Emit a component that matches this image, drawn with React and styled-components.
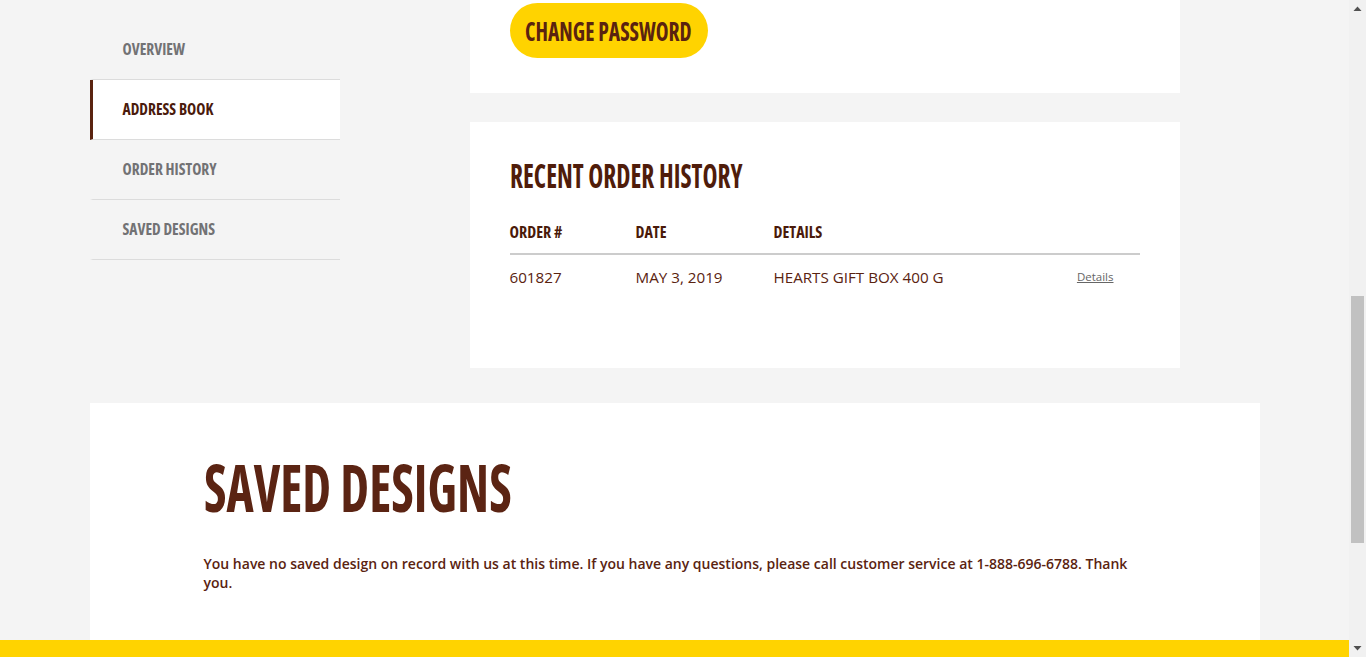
import React from 'react';
import styled, { createGlobalStyle } from 'styled-components';

const brown = '#5a2310';
const yellow = '#ffd300';

const GlobalStyle = createGlobalStyle`
  html, body {
    margin: 0;
    padding: 0;
  }
  body {
    background: #f4f4f4;
    font-family: "Open Sans", "Liberation Sans", sans-serif;
    color: ${brown};
  }
  * {
    box-sizing: border-box;
  }
`;

const Page = styled.div`
  display: flex;
  height: 100vh;
  overflow: hidden;
`;

const Content = styled.div`
  flex: 1;
  min-width: 0;
  display: flex;
  flex-direction: column;
  overflow: hidden;
`;

const Container = styled.div`
  width: 1170px;
  margin: 0 auto;
`;

const AccountGrid = styled.div`
  display: grid;
  grid-template-columns: 250px 710px;
  column-gap: 130px;
  align-items: start;
`;

const SideNav = styled.nav`
  display: flex;
  flex-direction: column;
  padding-top: 20px;
`;

const NavItem = styled.a`
  display: flex;
  align-items: center;
  height: 60px;
  padding-left: 30px;
  padding-bottom: 1px;
  border-left: 3px solid ${(p) => (p.$active ? brown : 'transparent')};
  border-bottom: 1px solid #dcdcdc;
  background: ${(p) => (p.$active ? '#ffffff' : 'transparent')};
  color: ${(p) => (p.$active ? '#4a1a0b' : '#727274')};
  font-size: 15.5px;
  font-weight: 700;
  font-stretch: 75%;
  text-decoration: none;
`;

const MainColumn = styled.div`
  display: flex;
  flex-direction: column;
  gap: 29px;
`;

const Card = styled.section`
  background: #ffffff;
  padding: ${(p) => p.$pad};
`;

const Squeeze = styled.span`
  display: inline-block;
  white-space: nowrap;
  transform: scaleX(${(p) => p.$x});
  transform-origin: ${(p) => p.$origin || 'left'} center;
`;

const PillButton = styled.button`
  display: flex;
  align-items: center;
  justify-content: center;
  width: 198px;
  height: 55px;
  border: 0;
  border-radius: 28px;
  background: ${yellow};
  color: ${brown};
  font-family: "Open Sans", sans-serif;
  font-size: 26px;
  font-weight: 700;
  font-stretch: 75%;
  padding: 0;
  cursor: pointer;
`;

const CardTitle = styled.h2`
  margin: 0;
  font-size: 33px;
  line-height: 33px;
  font-weight: 700;
  font-stretch: 75%;
  color: #4f1c0a;
`;

const OrderTable = styled.div`
  margin-top: 30px;
`;

const TableRow = styled.div`
  display: grid;
  grid-template-columns: 126px 138px 1fr auto;
  align-items: center;
  padding: ${(p) => (p.$head ? '0 0 11px' : '12px 0 0')};
  border-bottom: ${(p) => (p.$head ? '2px solid #cccccc' : '0')};
`;

const HeadCell = styled.span`
  font-size: 16px;
  line-height: 20px;
  font-weight: 700;
  font-stretch: 75%;
  color: #4a1a0a;
`;

const Cell = styled.span`
  font-size: 15.2px;
  line-height: 20px;
  font-weight: 400;
  font-stretch: 90%;
  color: ${brown};
`;

const DetailsLink = styled.a`
  margin-right: 26px;
  font-size: 11.5px;
  line-height: 20px;
  font-stretch: 95%;
  color: #666666;
  text-decoration: underline;
`;

const SavedSection = styled.section`
  margin-top: 35px;
  background: #ffffff;
  padding: 50px 114px 48px;
`;

const BigTitle = styled.h2`
  margin: 0;
  font-size: 67px;
  line-height: 67px;
  font-weight: 700;
  font-stretch: 75%;
  color: #5b2413;
`;

const Note = styled.p`
  margin: 34px 0 0;
  font-size: 14px;
  line-height: 19px;
  font-weight: 600;
  color: ${brown};
`;

const Footer = styled.footer`
  flex: none;
  height: 80px;
  background: ${yellow};
`;

const ScrollTrack = styled.div`
  flex: none;
  width: 17px;
  height: 100%;
  background: #f1f1f1;
  display: flex;
  flex-direction: column;
`;

const ArrowBox = styled.div`
  flex: none;
  height: 17px;
  display: flex;
  align-items: center;
  justify-content: center;
`;

const ThumbArea = styled.div`
  flex: 1;
  display: flex;
  flex-direction: column;
  align-items: center;
`;

const Thumb = styled.div`
  width: 13px;
  background: #c1c1c1;
`;

const Arrow = ({ up }) => (
  <svg width="9" height="5" viewBox="0 0 9 5">
    <polygon points={up ? '0.5,5 4.5,0.5 8.5,5' : '0.5,0 4.5,4.5 8.5,0'} fill="#505050" />
  </svg>
);

const navItems = [
  { label: 'OVERVIEW' },
  { label: 'ADDRESS BOOK', active: true },
  { label: 'ORDER HISTORY' },
  { label: 'SAVED DESIGNS' },
];

const orders = [
  { id: '601827', date: 'MAY 3, 2019', details: 'HEARTS GIFT BOX 400 G' },
];

// page is shown scrolled down: these give the thumb of the scrollbar
const scroll = { offset: 742, page: 1657, view: 657 };
const trackLen = scroll.view - 34;
const thumbLen = Math.round((trackLen * scroll.view) / scroll.page);
const thumbTop = Math.round(((trackLen - thumbLen) * scroll.offset) / (scroll.page - scroll.view));

export default function App() {
  return (
    <>
      <GlobalStyle />
      <Page>
        <Content>
          <Container>
            <AccountGrid>
              <SideNav>
                {navItems.map((item) => (
                  <NavItem key={item.label} href="#" $active={item.active}>
                    {item.label}
                  </NavItem>
                ))}
              </SideNav>

              <MainColumn>
                <Card $pad="3px 40px 35px">
                  <PillButton>
                    <Squeeze $x={0.83} $origin="center">CHANGE PASSWORD</Squeeze>
                  </PillButton>
                </Card>

                <Card $pad="37px 40px 81px">
                  <CardTitle>
                    <Squeeze $x={0.77}>RECENT ORDER HISTORY</Squeeze>
                  </CardTitle>
                  <OrderTable>
                    <TableRow $head>
                      <HeadCell>ORDER #</HeadCell>
                      <HeadCell>DATE</HeadCell>
                      <HeadCell>DETAILS</HeadCell>
                      <span />
                    </TableRow>
                    {orders.map((o) => (
                      <TableRow key={o.id}>
                        <Cell>{o.id}</Cell>
                        <Cell>{o.date}</Cell>
                        <Cell>{o.details}</Cell>
                        <DetailsLink href="#">Details</DetailsLink>
                      </TableRow>
                    ))}
                  </OrderTable>
                </Card>
              </MainColumn>
            </AccountGrid>

            <SavedSection>
              <BigTitle>
                <Squeeze $x={0.77}>SAVED DESIGNS</Squeeze>
              </BigTitle>
              <Note>
                You have no saved design on record with us at this time. If you have any questions,
                please call customer service at 1-888-696-6788. Thank you.
              </Note>
            </SavedSection>
          </Container>
          <Footer />
        </Content>

        <ScrollTrack>
          <ArrowBox>
            <Arrow up />
          </ArrowBox>
          <ThumbArea>
            <Thumb style={{ marginTop: thumbTop, height: thumbLen }} />
          </ThumbArea>
          <ArrowBox>
            <Arrow />
          </ArrowBox>
        </ScrollTrack>
      </Page>
    </>
  );
}
